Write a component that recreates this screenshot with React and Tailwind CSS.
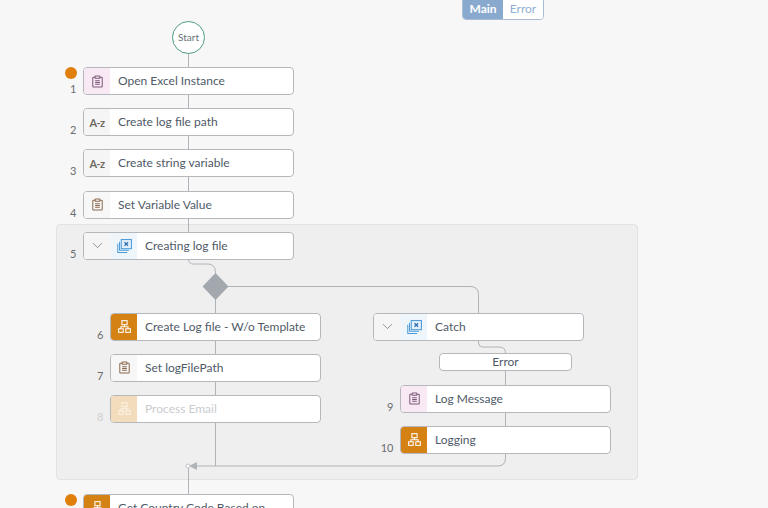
import { ChevronDown } from 'lucide-react'

function ClipboardIcon({ color = '#7d6a5a' }) {
  return (
    <svg width="11" height="13" viewBox="0 0 14 16" fill="none" stroke={color} strokeWidth="1.3">
      <path d="M4 2.500H1.800a.8.8 0 0 0-.8.8v11a.8.8 0 0 0 .8.8h10.400a.8.8 0 0 0 .8-.8v-11a.8.8 0 0 0-.8-.8H10" />
      <rect x="4" y="1" width="6" height="3" rx="0.6" />
      <path d="M4 7h6M4 9.200h6M4 11.400h6" />
    </svg>
  )
}

function FlowIcon({ color = '#fff' }) {
  return (
    <svg width="13" height="13" viewBox="0 0 16 16" fill="none" stroke={color} strokeWidth="1.300">
      <rect x="4.800" y="0.800" width="6.400" height="5" />
      <rect x="0.800" y="10.800" width="5.600" height="4.400" />
      <rect x="9.600" y="10.800" width="5.600" height="4.400" />
      <path d="M8 5.800v2.600M3.600 10.800V8.400h8.800v2.400" />
    </svg>
  )
}

function GroupIcon() {
  return (
    <svg width="15" height="14" viewBox="0 0 16 15" fill="none" stroke="#4a9ad8" strokeWidth="1.100">
      <rect x="4.500" y="0.600" width="10.900" height="9.800" fill="#e4f0fa" />
      <path d="M2.700 3v9.100h10M0.800 5v9.400h10" />
      <path d="M8 3.500l3.800 3.800M11.800 3.500L8 7.300" strokeWidth="1.400" stroke="#2f6fb0" />
    </svg>
  )
}

function AzIcon() {
  return <span className="text-[11px] font-bold text-[#6f6a64] leading-none tracking-[-0.6px]">A-z</span>
}

// one step of the flow: optional number on the left, then the node box
function Step({ num, numWidth = 'w-[27px]', label, iconBg, icon, collapsible, faded, warn }) {
  return (
    <div className="flex items-end">
      {numWidth && (
        <span className={`relative ${numWidth} shrink-0 pr-[6.5px] pb-[1px] text-right text-[11px] leading-none ${faded ? 'text-[#cfd0d2]' : 'text-[#6a6d70]'}`}>
          {num}
          {warn && <span className="absolute right-[6px] -top-[16px] w-[12px] h-[12px] rounded-full bg-[#e07f0c]" />}
        </span>
      )}
      <div className="relative z-20 h-[28px] w-[211px] flex bg-white border border-[#b4b8bd] rounded-[4px] overflow-hidden">
        {collapsible && (
          <div className="w-[27px] shrink-0 flex items-center justify-center bg-[#f5f5f5]">
            <ChevronDown size={17} strokeWidth={1} className="text-[#6a6d70]" />
          </div>
        )}
        <div className={`w-[26px] shrink-0 flex items-center justify-center ${iconBg}`}>{icon}</div>
        <span className={`pl-[8px] text-[12px] leading-[26px] whitespace-nowrap ${faded ? 'text-[#c9cbcf]' : 'text-[#4f5a68]'}`}>{label}</span>
      </div>
    </div>
  )
}

export default function App() {
  return (
    <div className='relative w-[768px] h-[508px] overflow-hidden bg-[#f7f7f7] font-["Lato","Liberation_Sans",sans-serif]'>
      {/* connectors, under the nodes but over the group panel */}
      <svg className="absolute left-0 top-0 z-10" width="768" height="508" fill="none" stroke="#b0b3b8" strokeWidth="1">
        <path d="M188.500 53V259q0 5 5 5H208q7 0 7.500 8V466" />
        <path d="M228 286.500H470q8.500 0 8.500 8V314" />
        <path d="M478.500 341v2q0 4 4 4H499q6.500 0 6.500 6V458q0 8-8 8H197" />
        <path d="M188.500 468V494" />
        <path d="M189 466l8-4v8z" fill="#b0b3b8" stroke="none" />
        <circle cx="188" cy="466" r="2" fill="#fff" strokeWidth="0.8" />
        <path d="M215.500 273l13 13.500-13 13.500-13-13.500z" fill="#a3a8ae" stroke="none" />
      </svg>

      {/* Main / Error switch */}
      <div className="pl-[462px] -mt-[4px]">
        <div className="w-[82px] h-[24px] flex rounded-[4px] border border-[#a9bdd6] overflow-hidden text-[12px] leading-[24px] text-center">
          <span className="w-[41px] bg-[#89a9cf] text-white font-bold">Main</span>
          <span className="w-[41px] bg-white text-[#8fb0d4]">Error</span>
        </div>
      </div>

      {/* main column */}
      <div className="pl-[56px] flex flex-col">
        <div className="relative z-20 ml-[116px] mt-[1px] w-[33px] h-[33px] rounded-full bg-white border border-[#4f9d7c] flex items-center justify-center text-[10px] text-[#667476]">
          Start
        </div>

        <div className="mt-[13px] flex flex-col gap-[13.2px]">
          <Step num="1" warn label="Open Excel Instance" iconBg="bg-[#f8e9f5]" icon={<ClipboardIcon color="#7b5a78" />} />
          <Step num="2" label="Create log file path" iconBg="bg-[#f5f5f5]" icon={<AzIcon />} />
          <Step num="3" label="Create string variable" iconBg="bg-[#f5f5f5]" icon={<AzIcon />} />
          <Step num="4" label="Set Variable Value" iconBg="bg-[#f7f7f7]" icon={<ClipboardIcon color="#8a6a50" />} />
        </div>

        {/* group panel */}
        <div className="mt-[5.4px] w-[582px] h-[256px] pt-[7px] bg-[#efefef] border border-[#e2e2e2] rounded-[4px]">
          <Step num="5" numWidth="w-[26px]" label="Creating log file" collapsible iconBg="bg-[#eef6fc]" icon={<GroupIcon />} />

          <div className="mt-[53px] flex">
            <div className="w-[264px] flex flex-col gap-[13px]">
              <Step num="6" numWidth="w-[53px]" label="Create Log file - W/o Template" iconBg="bg-[#d58215]" icon={<FlowIcon />} />
              <Step num="7" numWidth="w-[53px]" label="Set logFilePath" iconBg="bg-[#f7f7f7]" icon={<ClipboardIcon color="#8a6a50" />} />
              <Step num="8" numWidth="w-[53px]" faded label="Process Email" iconBg="bg-[#f3dcbc]" icon={<FlowIcon color="#fbf1e3" />} />
            </div>

            <div className="ml-[52px] flex flex-col">
              <Step numWidth={null} label="Catch" collapsible iconBg="bg-[#eef6fc]" icon={<GroupIcon />} />
              <div className="relative z-20 ml-[66px] mt-[12px] w-[133px] h-[18px] bg-white border border-[#b4b8bd] rounded-[4px] text-center text-[12px] leading-[16px] text-[#4f5a68]">
                Error
              </div>
              <div className="mt-[14px] flex flex-col gap-[13px]">
                <Step num="9" numWidth="w-[27px]" label="Log Message" iconBg="bg-[#f8e9f5]" icon={<ClipboardIcon color="#7b5a78" />} />
                <Step num="10" numWidth="w-[27px]" label="Logging" iconBg="bg-[#d58215]" icon={<FlowIcon />} />
              </div>
            </div>
          </div>
        </div>

        <div className="mt-[14px]">
          <Step num={'\u00a0'} warn label="Get Country Code Based on" iconBg="bg-[#d58215]" icon={<FlowIcon />} />
        </div>
      </div>
    </div>
  )
}
